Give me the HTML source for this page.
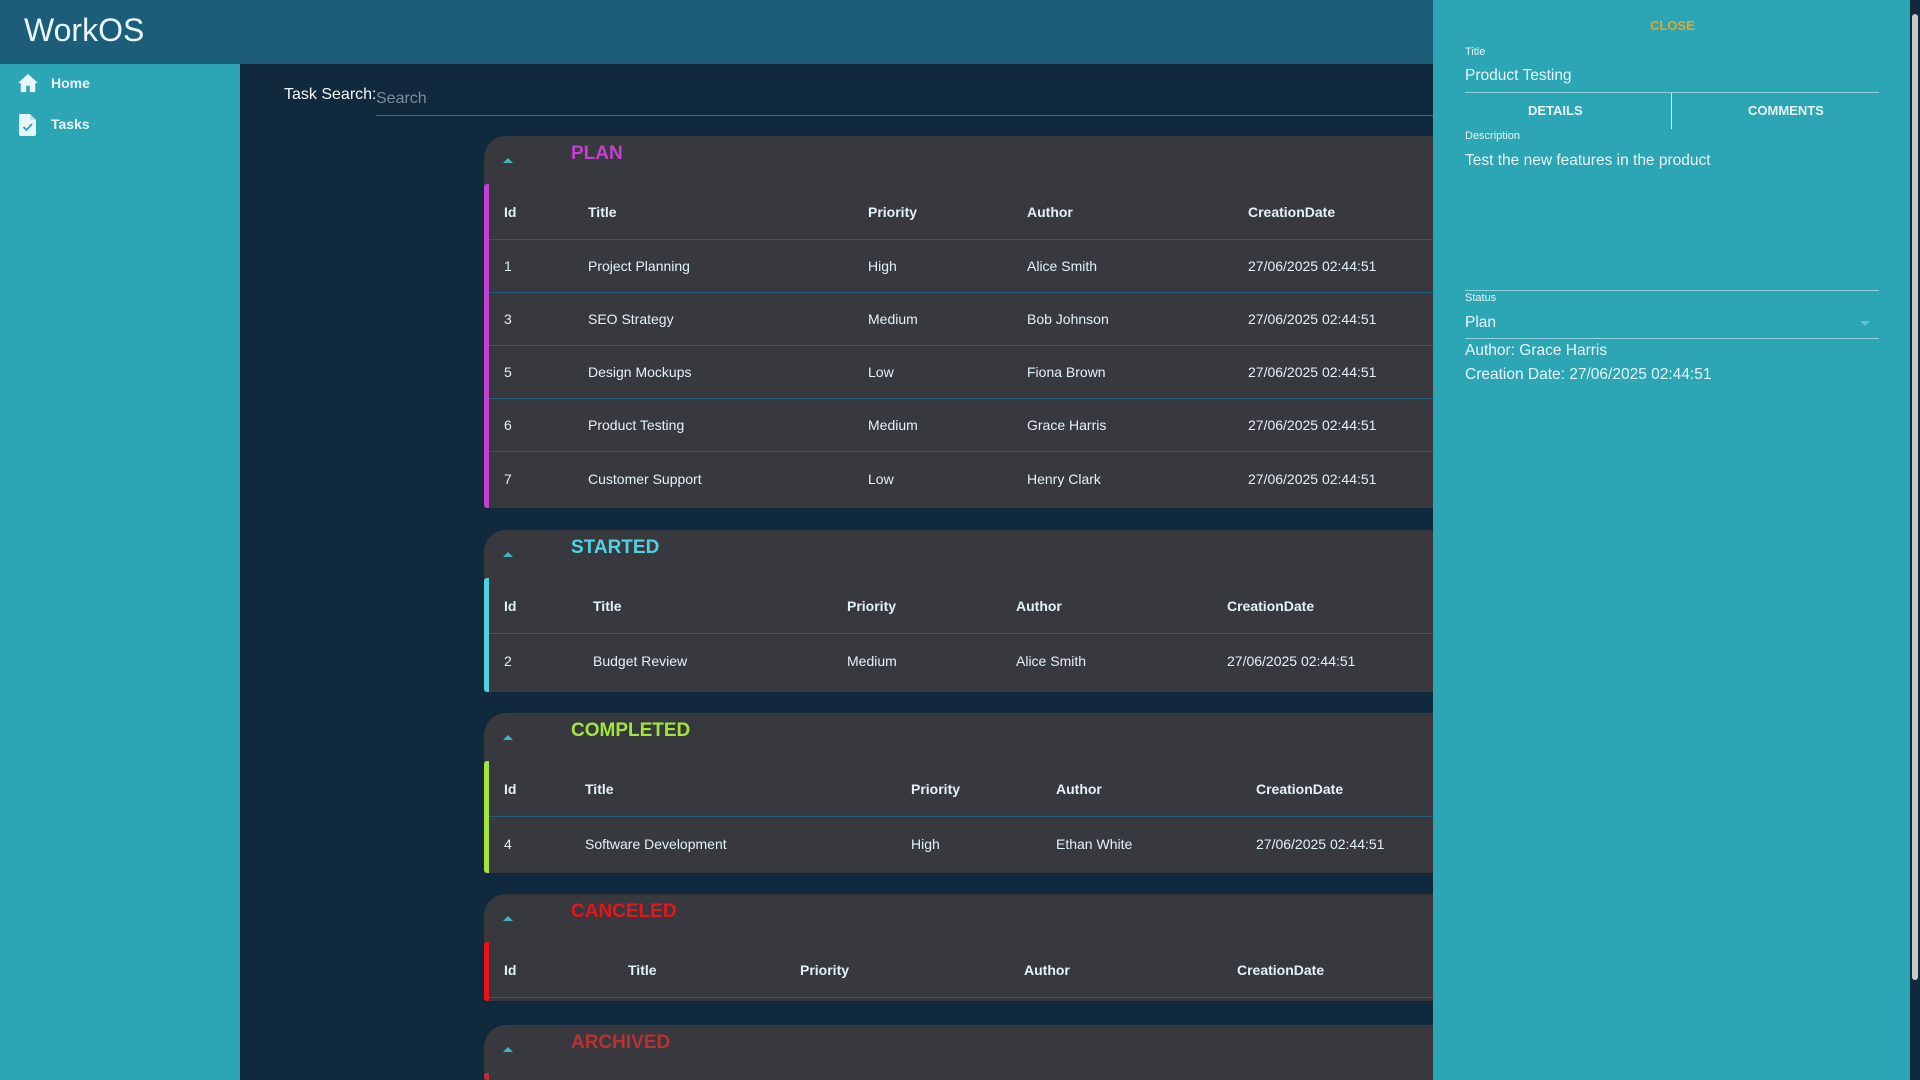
<!DOCTYPE html>
<html><head><meta charset="utf-8"><style>
*{margin:0;padding:0;box-sizing:border-box}
html{width:1920px;height:1080px;overflow:hidden}
body{width:1920px;height:1080px;overflow:hidden;background:#10293d;font-family:"Liberation Sans",sans-serif;color:#e3f2f8;position:relative}
.a{position:absolute;white-space:nowrap}
#hdr{left:0;top:0;width:1920px;height:64px;background:#1c5e7a}
#side{left:0;top:64px;width:240px;height:1016px;background:#2ca5b4}
.panel{position:absolute;left:484px;width:960px;background:#38383f;border-top-left-radius:22px;border-bottom-left-radius:4px}
.ptitle{position:absolute;left:87px;top:7px;font-size:19px;font-weight:bold}
.arr{position:absolute;left:19px;top:22px;width:0;height:0;border-left:5px solid transparent;border-right:5px solid transparent;border-bottom:5px solid #3fb5c4}
.bar{position:absolute;left:0;top:48px;bottom:0;width:5px;border-radius:3px 0 0 3px}
.row{position:absolute;left:5px;right:0;border-bottom:1px solid #23607a;font-size:14px}
.row span{position:absolute;top:50%;transform:translateY(-50%)}
.h{height:56px;font-weight:bold}
.d{height:53px}
</style></head><body>
<div class="a" id="hdr"></div>
<div class="a" style="left:24px;top:12px;font-size:32px;color:#e8f6fb">WorkOS</div>
<div class="a" id="side"></div>
<svg class="a" style="left:17px;top:73px" width="22" height="20" viewBox="0 0 24 22"><path d="M12 1L1 11h3v10h6v-7h4v7h6V11h3z" fill="#e8f6fb"/></svg>
<div class="a" style="left:51px;top:75px;font-size:14px;font-weight:bold;color:#e8f6fb">Home</div>
<svg class="a" style="left:19px;top:114px" width="18" height="22" viewBox="0 0 18 22"><path d="M2 0h9l6 6v14a2 2 0 0 1-2 2H2a2 2 0 0 1-2-2V2a2 2 0 0 1 2-2z" fill="#e8f6fb"/><path d="M11 0v6h6" fill="#b8e6ec"/><path d="M4.5 13l3 3 5.5-6" stroke="#2ca5b4" stroke-width="1.8" fill="none"/></svg>
<div class="a" style="left:51px;top:116px;font-size:14px;font-weight:bold;color:#e8f6fb">Tasks</div>

<div class="a" style="left:284px;top:86px;font-size:16px;color:#f0f6f8">Task Search:</div>
<div class="a" style="left:376px;top:90px;font-size:16px;color:#7d8c98">Search</div>
<div class="a" style="left:376px;top:115px;width:1060px;height:1px;background:#4d6678"></div>

<div class="panel" style="top:136px;height:372px">
<div class="arr"></div><div class="ptitle" style="color:#c440d2">PLAN</div>
<div class="bar" style="background:#c440d2"></div>
<div class="row h" style="top:48px"><span style="left:15px">Id</span><span style="left:99px">Title</span><span style="left:379px">Priority</span><span style="left:538px">Author</span><span style="left:759px">CreationDate</span></div>
<div class="row d" style="top:104px"><span style="left:15px">1</span><span style="left:99px">Project Planning</span><span style="left:379px">High</span><span style="left:538px">Alice Smith</span><span style="left:759px">27/06/2025 02:44:51</span></div>
<div class="row d" style="top:157px"><span style="left:15px">3</span><span style="left:99px">SEO Strategy</span><span style="left:379px">Medium</span><span style="left:538px">Bob Johnson</span><span style="left:759px">27/06/2025 02:44:51</span></div>
<div class="row d" style="top:210px"><span style="left:15px">5</span><span style="left:99px">Design Mockups</span><span style="left:379px">Low</span><span style="left:538px">Fiona Brown</span><span style="left:759px">27/06/2025 02:44:51</span></div>
<div class="row d" style="top:263px"><span style="left:15px">6</span><span style="left:99px">Product Testing</span><span style="left:379px">Medium</span><span style="left:538px">Grace Harris</span><span style="left:759px">27/06/2025 02:44:51</span></div>
<div class="row d" style="top:316px;border:none"><span style="left:15px">7</span><span style="left:99px">Customer Support</span><span style="left:379px">Low</span><span style="left:538px">Henry Clark</span><span style="left:759px">27/06/2025 02:44:51</span></div>
</div>

<div class="panel" style="top:530px;height:162px">
<div class="arr"></div><div class="ptitle" style="color:#4fd3e3">STARTED</div>
<div class="bar" style="background:#4fd3e3"></div>
<div class="row h" style="top:48px"><span style="left:15px">Id</span><span style="left:104px">Title</span><span style="left:358px">Priority</span><span style="left:527px">Author</span><span style="left:738px">CreationDate</span></div>
<div class="row d" style="top:104px;border:none"><span style="left:15px">2</span><span style="left:104px">Budget Review</span><span style="left:358px">Medium</span><span style="left:527px">Alice Smith</span><span style="left:738px">27/06/2025 02:44:51</span></div>
</div>

<div class="panel" style="top:713px;height:160px">
<div class="arr"></div><div class="ptitle" style="color:#a2e63c">COMPLETED</div>
<div class="bar" style="background:#a2e63c"></div>
<div class="row h" style="top:48px"><span style="left:15px">Id</span><span style="left:96px">Title</span><span style="left:422px">Priority</span><span style="left:567px">Author</span><span style="left:767px">CreationDate</span></div>
<div class="row d" style="top:104px;border:none"><span style="left:15px">4</span><span style="left:96px">Software Development</span><span style="left:422px">High</span><span style="left:567px">Ethan White</span><span style="left:767px">27/06/2025 02:44:51</span></div>
</div>

<div class="panel" style="top:894px;height:107px">
<div class="arr"></div><div class="ptitle" style="color:#e8141a">CANCELED</div>
<div class="bar" style="background:#f01018"></div>
<div class="row h" style="top:48px"><span style="left:15px">Id</span><span style="left:139px">Title</span><span style="left:311px">Priority</span><span style="left:535px">Author</span><span style="left:748px">CreationDate</span></div>
</div>

<div class="panel" style="top:1025px;height:55px;border-bottom-left-radius:0">
<div class="arr"></div><div class="ptitle" style="color:#b83232">ARCHIVED</div>
<div class="bar" style="background:#b83232"></div>
</div>

<div class="a" style="left:1433px;top:0;width:477px;height:1080px;background:#2ca5b4"></div>
<div class="a" style="left:1910px;top:0;width:10px;height:1080px;background:#10293d"></div>
<div class="a" style="left:1912px;top:14px;width:6px;height:966px;background:#c8c8c8;border-radius:3px"></div>
<div class="a" style="left:1650px;top:18px;font-size:13px;font-weight:bold;color:#e0a826">CLOSE</div>
<div class="a" style="left:1465px;top:46px;font-size:11px;color:#e8f6fb">Title</div>
<div class="a" style="left:1465px;top:67px;font-size:15.5px;color:#e8f6fb">Product Testing</div>
<div class="a" style="left:1465px;top:92px;width:414px;height:1px;background:#8fd3dc"></div>
<div class="a" style="left:1671px;top:93px;width:1px;height:36px;background:#e8f6fb"></div>
<div class="a" style="left:1528px;top:103px;font-size:13px;font-weight:bold;color:#e8f6fb">DETAILS</div>
<div class="a" style="left:1748px;top:103px;font-size:13px;font-weight:bold;color:#e8f6fb">COMMENTS</div>
<div class="a" style="left:1465px;top:130px;font-size:11px;color:#e8f6fb">Description</div>
<div class="a" style="left:1465px;top:152px;font-size:15.5px;color:#e8f6fb">Test the new features in the product</div>
<div class="a" style="left:1465px;top:290px;width:414px;height:1px;background:#8fd3dc"></div>
<div class="a" style="left:1465px;top:292px;font-size:11px;color:#e8f6fb">Status</div>
<div class="a" style="left:1465px;top:314px;font-size:15.5px;color:#e8f6fb">Plan</div>
<div class="a" style="left:1860px;top:321px;width:0;height:0;border-left:5px solid transparent;border-right:5px solid transparent;border-top:5px solid #5fc6d2"></div>
<div class="a" style="left:1465px;top:338px;width:414px;height:1px;background:#8fd3dc"></div>
<div class="a" style="left:1465px;top:342px;font-size:15.5px;color:#e8f6fb">Author: Grace Harris</div>
<div class="a" style="left:1465px;top:366px;font-size:15.5px;color:#e8f6fb">Creation Date: 27/06/2025 02:44:51</div>
</body></html>
